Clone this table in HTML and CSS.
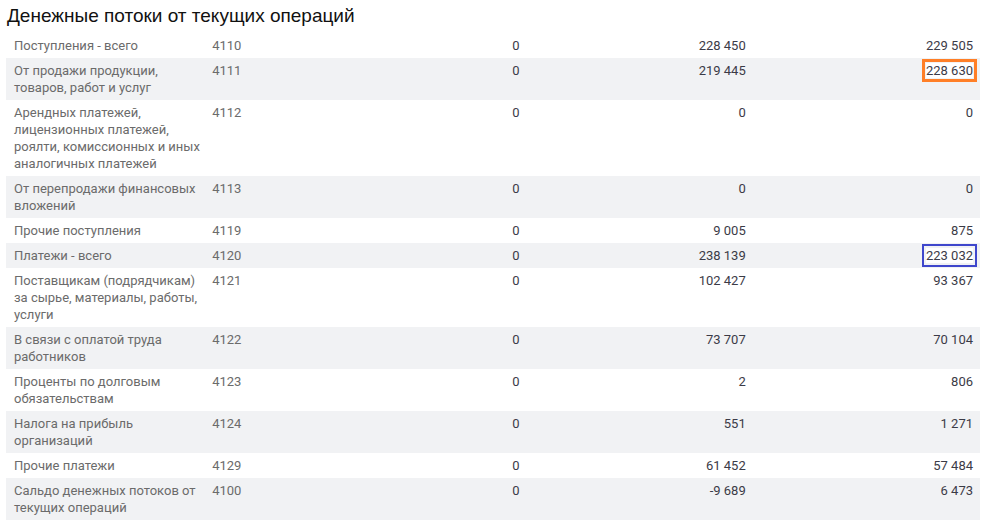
FILE: index.html
```html
<!DOCTYPE html>
<html lang="ru">
<head>
<meta charset="utf-8">
<link rel="stylesheet" href="styles.css">
</head>
<body>
<h2 class="title">Денежные потоки от текущих операций</h2>
<table class="report">
  <colgroup>
    <col class="c-name"><col class="c-code"><col class="c-num"><col class="c-num"><col class="c-num">
  </colgroup>
  <tbody>
    <tr><td class="name">Поступления - всего</td><td class="code">4110</td><td class="num">0</td><td class="num">228 450</td><td class="num">229 505</td></tr>
    <tr><td class="name">От продажи продукции, товаров, работ и услуг</td><td class="code">4111</td><td class="num">0</td><td class="num">219 445</td><td class="num"><span class="mark mark-orange">228 630</span></td></tr>
    <tr><td class="name">Арендных платежей, лицензионных платежей, роялти, комиссионных и иных аналогичных платежей</td><td class="code">4112</td><td class="num">0</td><td class="num">0</td><td class="num">0</td></tr>
    <tr><td class="name">От перепродажи финансовых вложений</td><td class="code">4113</td><td class="num">0</td><td class="num">0</td><td class="num">0</td></tr>
    <tr><td class="name">Прочие поступления</td><td class="code">4119</td><td class="num">0</td><td class="num">9 005</td><td class="num">875</td></tr>
    <tr><td class="name">Платежи - всего</td><td class="code">4120</td><td class="num">0</td><td class="num">238 139</td><td class="num"><span class="mark mark-blue">223 032</span></td></tr>
    <tr><td class="name">Поставщикам (подрядчикам) за сырье, материалы, работы, услуги</td><td class="code">4121</td><td class="num">0</td><td class="num">102 427</td><td class="num">93 367</td></tr>
    <tr><td class="name">В связи с оплатой труда работников</td><td class="code">4122</td><td class="num">0</td><td class="num">73 707</td><td class="num">70 104</td></tr>
    <tr><td class="name">Проценты по долговым обязательствам</td><td class="code">4123</td><td class="num">0</td><td class="num">2</td><td class="num">806</td></tr>
    <tr><td class="name">Налога на прибыль организаций</td><td class="code">4124</td><td class="num">0</td><td class="num">551</td><td class="num">1 271</td></tr>
    <tr><td class="name">Прочие платежи</td><td class="code">4129</td><td class="num">0</td><td class="num">61 452</td><td class="num">57 484</td></tr>
    <tr><td class="name">Сальдо денежных потоков от текущих операций</td><td class="code">4100</td><td class="num">0</td><td class="num">-9 689</td><td class="num">6 473</td></tr>
  </tbody>
</table>
</body>
</html>
```

FILE: styles.css
```css
body {
  margin: 0;
  padding: 4px 9px 0 6px;
  background: #fff;
  font-family: Roboto, "Noto Sans", sans-serif;
}
.title {
  margin: 0 0 6px 1px;
  font-family: "Liberation Sans", Arial, sans-serif;
  font-weight: 400;
  font-size: 19px;
  line-height: 23px;
  color: #111;
}
.report {
  width: 974px;
  border-collapse: collapse;
  table-layout: fixed;
  font-size: 13px;
  line-height: 17px;
}
.c-name { width: 198px; }
.c-code { width: 97px; }
.c-num { width: 226px; }
.report td {
  padding: 4px 8px;
  vertical-align: top;
}
.report td.name { padding-right: 0; }
.report tr:nth-child(even) td { background: #f1f2f4; }
.name, .code { color: #6b6b6b; }
.num { text-align: right; color: #3b3b47; }
.report td:last-child { padding-right: 7px; }
.mark {
  background: #fff;
  outline-offset: 1px;
}
.mark-orange { outline: 3px solid #ff7f27; }
.mark-blue { outline: 2px solid #3f47cc; outline-offset: 2px; }
```
